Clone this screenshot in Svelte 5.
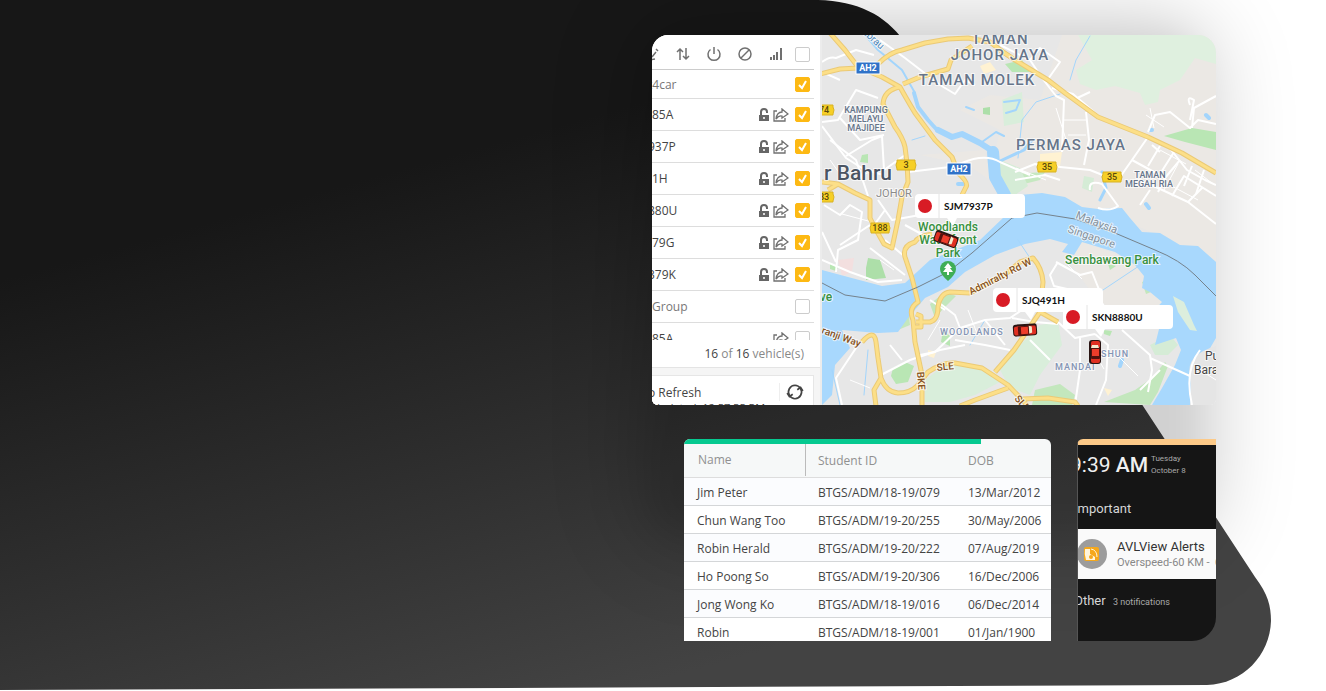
<script>
  const vehicles = [
    { name: 't4car', cut: true, group: true, checked: true },
    { name: '85A', lock: true, share: true, checked: true },
    { name: '937P', cut: true, lock: true, share: true, checked: true },
    { name: '1H', lock: true, share: true, checked: true },
    { name: '880U', cut: true, lock: true, share: true, checked: true },
    { name: '79G', lock: true, share: true, checked: true },
    { name: '379K', cut: true, lock: true, share: true, checked: true },
    { name: 'Group', group: true, checked: false },
    { name: '85A', share: true, checked: false }
  ];

  const students = [
    ['Jim Peter', 'BTGS/ADM/18-19/079', '13/Mar/2012'],
    ['Chun Wang Too', 'BTGS/ADM/19-20/255', '30/May/2006'],
    ['Robin Herald', 'BTGS/ADM/19-20/222', '07/Aug/2019'],
    ['Ho Poong So', 'BTGS/ADM/19-20/306', '16/Dec/2006'],
    ['Jong Wong Ko', 'BTGS/ADM/18-19/016', '06/Dec/2014'],
    ['Robin', 'BTGS/ADM/18-19/001', '01/Jan/1900']
  ];

  const arterials = [
    'M830 33L845 50L858 67L882 77L900 87Q906 98 915 113L935 140L952 157L958 173Q969 183 966 187L961 197',
    'M820 74L840 69L858 68L878 64Q890 52 902 50L925 43L948 39L968 38L990 42L1003 52L1015 60',
    'M903 84L920 77L948 69L951 60L972 46',
    'M900 87Q884 90 883 104L895 127Q903 138 905 147L907 163L908 182L902 197L898 220L892 248L884 244L875 228L870 218L870 200L855 193L838 184L822 182M838 184L828 190',
    'M932 234Q918 236 915 242Q902 246 905 257L912 278L918 302Q908 308 913 320L915 342L922 375L922 406M914 327L921 327L921 316L916 314',
    'M916 322L930 322Q938 320 938 307Q940 293 950 292L970 293L1003 276L1020 262L1033 258Q1042 268 1043 282L1040 312L1014 350L995 372M1040 312L1058 322',
    'M862 342Q874 328 876 342L878 358L881 378Q886 392 898 393Q910 393 917 386L928 372Q942 362 955 363L982 368L1008 385L1028 406M881 378L874 390L876 406M1008 388L975 400L960 406M1022 399L1048 398L1075 402L1078 406'
  ];

  const streets = [
    'M822 62Q830 56 836 58L856 50L874 55M822 122L838 120L856 90L878 98M840 118L860 140L884 135M830 140L856 160L868 196M880 40L905 58L940 85L955 94L965 80L975 85',
    'M822 126L846 158L865 170L884 175M846 156L872 140L882 136L884 170L905 155M908 172L950 167L962 163Q985 153 1000 162L1030 175M824 205L840 215L850 205L862 212L858 240L838 250L836 272',
    'M840 245L870 225M870 248L905 275M904 256L885 240M878 200L892 220L920 215M885 210L872 228M905 225L925 236M822 260L850 272L878 282L902 280M822 232L836 262',
    'M1000 45L1030 60L1042 78L1056 96L1064 100L1062 152M1046 82L1060 62L1040 48L1030 60M1052 88L1073 94L1094 112L1104 120M1086 112L1089 140L1084 165M1073 100L1090 92',
    'M822 72L840 80M1015 172L1035 164L1060 167L1090 170L1110 178M1015 180L1045 175L1060 180M1148 137L1132 160L1118 180M1132 160L1165 178L1180 160M1148 137L1168 146L1187 170L1205 180L1216 185',
    'M1148 132L1155 115L1170 112L1190 128L1198 120L1216 124M1192 128L1194 108L1216 96M1190 105Q1186 95 1194 100L1190 120M1152 145L1160 152M1160 146L1148 166M1174 152L1160 174M1192 166L1184 186M1204 170L1196 194',
    'M1138 180L1158 188L1188 202L1216 224M1150 190L1140 205M1172 196L1184 176L1216 196M1188 202L1202 188M1165 178L1158 192M1090 190Q1088 180 1102 184L1118 206Q1110 212 1098 208',
    'M938 302L955 315L960 328L935 352L920 355M960 328L985 320L1010 318L1025 308M955 340L985 345L1010 350M985 320L1005 345M930 300L945 310M1012 318L1035 322L1058 324',
    'M1058 262L1050 275L1054 286L1080 292L1100 300L1108 312M1056 262L1080 275L1092 272L1100 292M1058 322L1075 338L1095 334M1080 338L1080 370L1075 405M1095 334L1108 345L1106 380L1096 405M1122 330L1150 355L1152 370L1148 392M1150 358L1190 376',
    'M858 345L848 360L836 378L842 405M881 375L910 360L940 350L965 345M902 360L890 345M1030 340L1050 360M1140 390L1160 370M1192 405Q1184 370 1200 350'
  ];

  const parks = [
    { d: 'M1078 35H1216V64L1195 58L1180 80L1160 90L1158 102L1145 105L1140 93L1115 86L1096 90L1080 84L1076 70L1092 60Z', c: '#dff0df' },
    { d: 'M1164 136L1192 128L1216 132V150L1185 142Z', c: '#b9e6b4' },
    { d: 'M1005 64L1022 60L1030 72L1012 72Z', c: '#b9e6b4' },
    { d: 'M1014 174L1045 172L1040 180L1024 184Z', c: '#c6e8c1' },
    { d: 'M1002 100L1022 92L1024 122L1004 126Z', c: '#d9eedb' },
    { d: 'M1000 160L1020 168L1028 186L1012 197L1000 180Z', c: '#d5ecd6' },
    { d: 'M1084 176L1094 178L1092 192L1082 188Z', c: '#d5ecd6' },
    { d: 'M868 258L880 260L886 278L866 280L866 268Z', c: '#addfa9' },
    { d: 'M830 264L839 266L836 271L830 269Z', c: '#b9e6b4' },
    { d: 'M862 155L868 154L868 163L860 162Z', c: '#b9e6b4' },
    { d: 'M983 108L990 107L990 115L983 114Z', c: '#addfa9' },
    { d: 'M893 368L905 362L914 366L908 382L896 384L891 376Z', c: '#b9e6b4' },
    { d: 'M925 380L945 365L965 362L985 370L1000 382L975 395L950 402H925Z', c: '#d9eedb' },
    { d: 'M1000 370L1020 345L1040 325L1058 322L1062 345L1040 375L1030 395L1010 388Z', c: '#d9eedb' },
    { d: 'M1035 390L1060 384L1075 395L1072 405H1032Z', c: '#c3e7bd' },
    { d: 'M930 304L945 292L956 296L944 308L935 318Z', c: '#c3e7bd' },
    { d: 'M943 330L950 336L950 346L941 342Z', c: '#b9e6b4' },
    { d: 'M900 315L908 308L910 325L898 330Z', c: '#c3e7bd' },
    { d: 'M1104 330L1112 331L1110 336L1104 334Z', c: '#b9e6b4' },
    { d: 'M1108 264L1116 266L1110 270Z', c: '#b9e6b4' },
    { d: 'M1150 345L1170 335L1178 345L1168 355L1155 355Z', c: '#d5ecd6' },
    { d: 'M1104 402L1135 390L1152 378L1165 362L1168 366L1158 392L1150 405Z', c: '#c3e7bd' },
    { d: 'M1142 282L1152 278L1156 290L1146 294Z', c: '#c3e7bd' }
  ];

  const plates = [
    { id: 'SJM7937P', x: 915, y: 194 },
    { id: 'SJQ491H', x: 993, y: 288 },
    { id: 'SKN8880U', x: 1063, y: 305 }
  ];

  const cars = [
    { x: 946, y: 239, r: 20 },
    { x: 1025, y: 330, r: -4 },
    { x: 1095, y: 352, r: -90 }
  ];

  const shields = [
    { t: 'AH2', x: 868, y: 68, blue: true },
    { t: 'AH2', x: 959, y: 169, blue: true },
    { t: '3', x: 906, y: 165 },
    { t: '35', x: 1047, y: 167 },
    { t: '35', x: 1112, y: 177 },
    { t: '188', x: 880, y: 228 },
    { t: '74', x: 824, y: 110 },
    { t: '33', x: 824, y: 197 }
  ];
</script>

<section class="hero">
  <svg class="backdrop" viewBox="0 0 1326 691" preserveAspectRatio="none" aria-hidden="true">
    <defs>
      <linearGradient id="charcoal" gradientUnits="userSpaceOnUse" x1="470" y1="150" x2="620" y2="691">
        <stop offset="0" stop-color="#171717" />
        <stop offset="0.55" stop-color="#2f2f2f" />
        <stop offset="1" stop-color="#434343" />
      </linearGradient>
    </defs>
    <path fill="url(#charcoal)" d="M0 0H818C858 1 885 15 904 41L1255 577C1268 594 1271 606 1271 621C1270 655 1243 684 1207 685L0 690Z" />
  </svg>

  <div class="gallery">
    <div class="tracker">
      <aside class="panel">
        <div class="tools">
          <button aria-label="Link"><svg viewBox="0 0 16 16"><path d="M8 11l4-5M5 14l6-1M12 3l2 2" /></svg></button>
          <button aria-label="Sort"><svg viewBox="0 0 16 16"><path d="M5 14V3M2 6l3-3 3 3M11 2v11M8 10l3 3 3-3" /></svg></button>
          <button aria-label="Power"><svg viewBox="0 0 16 16"><path d="M8 1v7M4.500 3.500a6 6 0 1 0 7 0" /></svg></button>
          <button aria-label="Block"><svg viewBox="0 0 16 16"><circle cx="8" cy="8" r="6" /><path d="M4 12l8-8" /></svg></button>
          <button aria-label="Signal"><svg viewBox="0 0 16 16"><path stroke-width="2" d="M3 14v-3M6 14V9M9 14V6M13 14V2" /></svg></button>
          <input type="checkbox" aria-label="All" />
        </div>
        <ul class="list">
          {#each vehicles as v, i}
            <li class:first={i === 0}>
              <label for="vehicle-{i}" class:cut={v.cut} class:group={v.group}>{v.name}</label>
              {#if v.lock}
                <svg class="lock" viewBox="0 0 12 14" aria-hidden="true">
                  <path d="M3 7V4a3 3 0 0 1 6 0v1" fill="none" stroke="#666" stroke-width="2" />
                  <path d="M1 7h10v6H1z" fill="#666" /><path d="M5 9h2v2H5z" fill="#ddd" />
                </svg>
              {/if}
              {#if v.share}
                <svg class="share" viewBox="0 0 16 14" aria-hidden="true">
                  <path d="M4 3H1v10h11v-3" /><path d="M9 1l6 5-6 4V8Q6 7 3 11Q4 4 9 4z" />
                </svg>
              {/if}
              <input id="vehicle-{i}" type="checkbox" checked={v.checked} />
            </li>
          {/each}
        </ul>
        <p class="count"><b>16</b> of <b>16</b> vehicle(s)</p>
        <div class="refresh">
          <div class="refresh-box">
            <div class="refresh-row">
              <span class="cut">o Refresh</span>
              <button aria-label="Refresh">
                <svg viewBox="0 0 16 16"><path d="M3 11A6 6 0 0 1 8 2q3 0 5 3M13 5a6 6 0 0 1-5 9q-3 0-5-3" /><path d="M1 9l2 3 3-2M15 7l-2-3-3 2" /></svg>
              </button>
            </div>
            <span class="updated">Updated: 12:57:55 PM</span>
          </div>
        </div>
      </aside>

      <svg class="map" viewBox="822 35 394 370" preserveAspectRatio="xMidYMid slice" role="img" aria-label="Map">
        <rect x="822" y="35" width="394" height="370" fill="#e7e7e7" />
        <path fill="#ebe8e4" d="M1062 35L1216 35V262L1135 225L1040 200L990 175L1000 130L960 110L990 95L1040 100Z" />
        <path fill="#ebe8e4" d="M1082 240L1140 265L1165 300L1150 330L1110 310L1090 290L1060 250ZM920 155L985 150L990 180L968 165Z" />
        {#each parks as p}<path d={p.d} fill={p.c} />{/each}
        <path fill="#f3dfdf" d="M838 260L854 258L852 272L842 276Z" />
        <path fill="#fff2d2" d="M1040 154L1062 152L1060 166L1040 170ZM980 66L990 62L996 70L984 74ZM928 350L936 352L934 358L928 356ZM1104 388L1112 390L1108 396Z" />
        <path fill="#a8d8fd" d="M822 270L848 277L882 286L905 283L930 260L950 252L980 240L1004 217L1010 205L1003 193L1010 197L1020 195L1042 193L1065 197L1082 207L1098 209L1122 208L1130 218L1142 232L1160 233L1180 245L1198 246L1216 262V338L1202 362L1192 378L1190 405H1152L1162 388L1175 365L1181 350L1176 338L1155 345L1160 325L1150 315L1162 302L1150 292L1142 288L1144 276L1135 265L1115 252L1082 242L1074 255L1062 252L1068 244L1050 239L1025 244L995 255L965 272L948 287L925 298L908 318L898 332L878 333L842 330L850 348L835 365L832 395L822 405Z" />
        <path fill="#dceedd" d="M1173 296L1184 302L1194 325L1197 331L1190 330L1178 312Z" />
        <path fill="#e5e5e5" d="M1216 346Q1185 355 1190 376L1192 405H1216Z" />
        <g fill="none" stroke="#a3d5fc" stroke-linejoin="round" stroke-linecap="round">
          <path stroke-width="2" d="M866 36L878 50L902 70L915 93" />
          <path stroke-width="1" d="M1090 36L1076 60L1070 80M1060 94L1036 102L1022 120L1018 158" />
          <path stroke-width="4" d="M914 93L918 107L928 120L938 131" />
          <path stroke-width="6" d="M938 130L952 137L962 134L980 143L991 150" />
          <path stroke-width="12" d="M993 152L995 177L1005 195" />
          <path stroke-width="3" d="M998 162L1024 150L1032 140M1100 200L1106 188L1102 172" />
          <path stroke-width="2" d="M966 107L974 110M1004 102L1020 100L1016 110L1006 113M982 142L996 132L1004 136" />
          <path stroke-width="1" d="M832 370L840 405M868 350L864 395M1018 240L1030 258M1100 292L1145 262M985 320L970 345M912 140L925 136" />
          <path stroke-width="4" d="M1150 130L1152 130M1206 115L1209 118M1120 366L1122 360M1146 204L1149 208M958 184L963 184" />
        </g>
        <g fill="none" stroke="#fff" stroke-width="2" stroke-linejoin="round">
          {#each streets as d}<path {d} />{/each}
        </g>
        <path fill="none" stroke="#fff" stroke-width="1" d="M1146 115l18 12M1150 108l4 20M1160 150l26 14M1168 184l30 16M1178 164l-14 26M1195 170l18 14M1016 168l30 12M1056 108l12 38M1064 120h22M1068 135h18M830 160l10 14M856 178l18-8M888 188l14 8M842 214l30 8M880 260l14 10M940 320l-12 20M968 310l10 26M1090 345l14 24M1112 350l26 26M1068 265l14 14M850 380l20 8M1200 370l16 10" />
        <g fill="none" stroke="#ebca76" stroke-width="5" stroke-linejoin="round">
          {#each arterials as d}<path {d} />{/each}
          <path d="M1000 50L1015 60L1048 80L1065 93L1098 117L1148 137L1182 153L1216 173" />
        </g>
        <g fill="none" stroke="#fcdf88" stroke-width="3" stroke-linejoin="round">
          {#each arterials as d}<path {d} />{/each}
          <path d="M1000 50L1015 60L1048 80L1065 93L1098 117L1148 137L1182 153L1216 173" />
        </g>
        <path fill="none" stroke="#75828c" stroke-width="1" d="M822 283L845 295L885 301L918 287L948 272L972 253L1012 218L1037 213L1075 219L1115 233L1155 250Q1180 260 1195 275L1216 296" />

        <g class="district" text-anchor="middle">
          <text x="1000" y="44">TAMAN</text>
          <text x="1000" y="60">JOHOR JAYA</text>
          <text x="977" y="85">TAMAN MOLEK</text>
          <text x="1071" y="150">PERMAS JAYA</text>
        </g>
        <text class="city" x="824" y="180">r Bahru</text>
        <g class="suburb" text-anchor="middle">
          <text x="866" y="113">KAMPUNG</text>
          <text x="866" y="122">MELAYU</text>
          <text x="866" y="131">MAJIDEE</text>
          <text x="1150" y="178">TAMAN</text>
          <text x="1149" y="187">MEGAH RIA</text>
        </g>
        <text class="state" x="876" y="197">JOHOR</text>
        <g class="area">
          <text x="940" y="335">WOODLANDS</text>
          <text x="1055" y="370">MANDAI</text>
          <text x="1101" y="357">SHUN</text>
        </g>
        <g class="park" text-anchor="middle">
          <text x="948" y="231">Woodlands</text>
          <text x="948" y="244">Waterfront</text>
          <text x="948" y="257">Park</text>
          <text x="1112" y="264">Sembawang Park</text>
          <text x="826" y="301">ve</text>
        </g>
        <g class="road">
          <text transform="translate(971 295) rotate(-27)">Admiralty Rd W</text>
          <text transform="translate(821 333) rotate(20)">ranji Way</text>
          <text transform="translate(937 371) rotate(-6)">SLE</text>
          <text transform="translate(917 372) rotate(86)">BKE</text>
          <text transform="translate(1014 399) rotate(48)">SLE</text>
        </g>
        <text class="river" transform="translate(862 33) rotate(42)">ebrau</text>
        <g class="border-label">
          <text transform="translate(1075 218) rotate(21)">Malaysia</text>
          <text transform="translate(1067 232) rotate(19)">Singapore</text>
        </g>
        <g class="place">
          <text x="1205" y="360">Pu</text>
          <text x="1194" y="374">Bara</text>
        </g>

        {#each shields as s}
          <g transform="translate({s.x} {s.y})">
            {#if s.blue}
              <rect x="-12" y="-6" width="24" height="12" fill="#2f72c8" stroke="#fff" />
            {:else}
              <path d="M-9 -5H9V-3L10 0L9 4V5H-9V4L-10 0L-9 -3Z" fill="#f6cf26" stroke="#d9b222" />
            {/if}
            <text class="shield" class:light={s.blue} text-anchor="middle" y="3">{s.t}</text>
          </g>
        {/each}

        <path d="M948 281Q940 274 940 269A8 8 0 0 1 956 269Q956 274 948 281Z" fill="#3fae56" />
        <path d="M948 263l4 5h-2l3 4h-4v3h-2v-3h-4l3-4h-2z" fill="#fff" />

        {#each plates as p}
          <g transform="translate({p.x} {p.y})">
            <path d="M4 0H106Q110 0 110 4V20Q110 24 106 24H42L38 32L32 24H4Q0 24 0 20V4Q0 0 4 0Z" fill="#fff" />
            <path d="M24 0V24" stroke="#e4e4e4" />
            <circle cx="10" cy="12" r="7" fill="#d81b25" />
            <text class="plate" x="29" y="16">{p.id}</text>
          </g>
        {/each}

        {#each cars as c}
          <g transform="translate({c.x} {c.y}) rotate({c.r})">
            <rect x="-12" y="-6" width="24" height="12" rx="3" fill="#2a1513" />
            <rect x="-11" y="-4" width="22" height="9" rx="2" fill="#e03022" />
            <rect x="-7" y="-4" width="12" height="9" rx="1" fill="#54120e" />
            <rect x="-4" y="-3" width="7" height="7" fill="#ee3d2b" />
            <path d="M4 -4L7 -3V3L4 4Z" fill="#f4ecd0" />
          </g>
        {/each}
      </svg>
    </div>

    <div class="lower">
      <div class="students">
        <div class="accent"></div>
        <table>
          <thead>
            <tr><th class="name"><span>Name</span></th><th class="sid">Student ID</th><th>DOB</th></tr>
          </thead>
          <tbody>
            {#each students as s}
              <tr><td>{s[0]}</td><td class="sid">{s[1]}</td><td>{s[2]}</td></tr>
            {/each}
          </tbody>
        </table>
      </div>

      <div class="phone">
        <div class="clock">
          <span class="time">9:39 <b>AM</b></span>
          <span class="date">Tuesday<br />October 8</span>
        </div>
        <div class="section important">Important</div>
        <div class="alert">
          <svg viewBox="0 0 30 30" aria-hidden="true">
            <circle cx="15" cy="15" r="15" fill="#9c9c9c" />
            <rect x="7" y="8" width="15" height="14" rx="2" fill="#f5a81c" />
            <path d="M8 10h5v5l5 3v3H9Q7 15 8 10Z" fill="#fff5dc" />
            <path d="M14 10q6 1 6 8" fill="none" stroke="#fff5dc" /><circle cx="14" cy="18" r="2" fill="#f5a81c" />
          </svg>
          <div class="message">
            <div class="title">AVLView Alerts</div>
            <div class="text">Overspeed-60 KM -&nbsp; C</div>
          </div>
        </div>
        <div class="section other">Other <small>3 notifications</small></div>
      </div>
    </div>
  </div>
</section>

<style>
  :global(body) { margin: 0; background: #fff; }
  * { box-sizing: border-box; }
  .hero {
    position: relative;
    isolation: isolate;
    overflow: hidden;
    padding: 35px 110px 50px 0;
    font-family: "Open Sans", "Noto Sans", sans-serif;
    font-size: 12px;
    color: #444;
  }
  .backdrop { position: absolute; z-index: -1; inset: 0; width: 100%; height: 100%; }
  .gallery {
    position: relative;
    width: calc(50% - 44px);
    min-width: 564px;
    margin-left: auto;
    display: grid;
    gap: 34px;
  }
  .gallery::before {
    content: "";
    position: absolute;
    inset: 0 20px 110px 0;
    border-radius: 30px;
    background: rgba(0, 0, 0, 0.18);
    box-shadow: 0 0 80px 12px rgba(0, 0, 0, 0.22);
    filter: blur(16px);
  }
  .tracker, .lower { position: relative; }
  .tracker {
    display: grid;
    grid-template-columns: 170px 1fr;
    height: 370px;
    overflow: hidden;
    border-radius: 16px 18px 6px 6px;
    background: #fff;
  }
  .panel {
    position: relative;
    display: flex;
    flex-direction: column;
    min-height: 0;
    background: #fff;
    border-right: 2px solid #ececec;
    overflow: hidden;
  }
  .tools {
    display: flex;
    align-items: center;
    justify-content: flex-end;
    height: 35px;
    flex: none;
    margin-right: 6px;
    padding: 4px 4px 0 0;
    border-bottom: 1px solid #ccc;
  }
  button { border: 0; padding: 0; background: none; cursor: pointer; }
  .tools button { width: 31px; flex: none; display: grid; place-items: center; }
  .tools svg { width: 16px; height: 16px; fill: none; stroke: #707070; stroke-width: 1.500; }
  .tools input { margin-left: 4px; }
  input {
    appearance: none;
    flex: none;
    width: 15px;
    height: 15px;
    margin: 0;
    border: 1px solid #ccc;
    border-radius: 2px;
    background: #fff;
  }
  input:checked {
    border-color: #fdb913;
    background: #fdb913 url("data:image/svg+xml,%3Csvg xmlns='http://www.w3.org/2000/svg' viewBox='0 0 13 13'%3E%3Cpath d='M3 7l3 3 4-7' fill='none' stroke='%23fff' stroke-width='2'/%3E%3C/svg%3E");
  }
  .list { list-style: none; margin: 0; padding: 0; flex: 1; min-height: 0; overflow: hidden; }
  .list li {
    display: flex;
    align-items: center;
    height: 32px;
    margin-right: 6px;
    padding-right: 4px;
    border-bottom: 1px solid #ddd;
  }
  .list li.first { height: 29px; }
  .list label { flex: 1; }
  .list .group { color: #777; }
  .cut { margin-left: -4px; }
  .lock { width: 12px; height: 14px; margin-right: 3px; }
  .share { width: 16px; height: 14px; margin-right: 6px; fill: none; stroke: #707070; stroke-width: 1.300; }
  .count {
    flex: none;
    margin: 0;
    padding-right: 16px;
    height: 28px;
    line-height: 28px;
    text-align: right;
    color: #888;
    border-bottom: 1px solid #e4e4e4;
  }
  .count b { color: #444; font-weight: 400; }
  .refresh { flex: none; height: 37px; padding: 7px 6px 0 0; background: #f5f5f5; overflow: hidden; }
  .refresh-box { background: #fff; border: 1px solid #e6e6e6; border-left: 0; }
  .refresh-row { display: flex; align-items: center; justify-content: space-between; height: 26px; padding: 6px 9px 0 0; }
  .refresh-row button { padding-left: 6px; border-left: 1px solid #eee; display: grid; }
  .refresh-row svg { width: 18px; height: 18px; fill: none; stroke: #444; stroke-width: 1.500; }
  .updated { display: block; font-size: 11px; line-height: 12px; }

  .map { display: block; width: 100%; height: 370px; font-family: Roboto, sans-serif; }
  .map text { paint-order: stroke; stroke: rgba(255, 255, 255, 0.7); stroke-width: 2px; }
  .district { font-size: 15px; font-weight: 500; fill: #66758a; letter-spacing: 1px; }
  .city { font-size: 21px; font-weight: 500; fill: #4b5563; }
  .suburb { font-size: 9px; font-weight: 500; fill: #66758a; }
  .state { font-size: 11px; fill: #8b8b8b; }
  .area { font-size: 9px; font-weight: 500; fill: #8494b4; letter-spacing: 1px; }
  .park { font-size: 12px; font-weight: 500; fill: #38913f; }
  .road { font-size: 10px; font-weight: 500; fill: #86521c; }
  .river { font-size: 10px; fill: #4c87bb; }
  .border-label { font-size: 11px; fill: #84909b; }
  .place { font-size: 12px; fill: #454545; }
  .map .shield { font-size: 9px; font-weight: 500; fill: #59490d; stroke: none; }
  .map .shield.light { fill: #fff; font-weight: 700; }
  .map .plate { font-family: Lato, sans-serif; font-size: 10px; font-weight: 700; fill: #111; stroke: none; }

  .lower {
    display: grid;
    grid-template-columns: 367px 1fr;
    column-gap: 26px;
    height: 202px;
    padding-left: 32px;
  }
  .students, .phone { overflow: hidden; min-width: 0; }
  .students { border-radius: 6px 6px 0 0; background: #f6f8f8; }
  .accent { width: 81%; height: 5px; background: #06c990; }
  table { width: 100%; border-collapse: collapse; table-layout: fixed; }
  th, td { padding: 2px 0 0; text-align: left; font-weight: 400; white-space: nowrap; }
  th { height: 33px; padding: 0; color: #909090; border-bottom: 1px solid #ddd; }
  th.name { width: 134px; padding-left: 14px; }
  th.name span { display: block; width: 108px; line-height: 32px; border-right: 1px solid #bbb; }
  .sid { width: 150px; }
  td { height: 28px; border-bottom: 1px solid #d4d6d8; background: #fff; }
  td:first-child { padding-left: 13px; }
  tbody tr:nth-child(odd) td { background: #fbfcfe; }

  .phone {
    border-top: 6px solid #fdca88;
    border-left: 1px solid #555;
    border-radius: 6px 0 24px 0;
    background: #151515;
    color: #d6d6d6;
    font-family: Roboto, sans-serif;
    white-space: nowrap;
  }
  .clock { display: flex; align-items: center; gap: 3px; height: 40px; margin-left: -8px; }
  .time { font-size: 21px; color: #f0f0f0; }
  .time b { font-weight: 500; }
  .date { font-size: 8px; line-height: 12px; color: #aaa; }
  .section { margin-left: -4px; font-size: 13px; }
  .important { height: 44px; line-height: 48px; }
  .alert { display: flex; align-items: center; gap: 10px; height: 50px; background: #fafafa; }
  .alert svg { flex: none; width: 30px; height: 30px; margin-left: -1px; }
  .title { font-size: 13px; line-height: 16px; color: #333; }
  .text { font-size: 11px; line-height: 15px; color: #888; }
  .other { line-height: 44px; }
  .other small { margin-left: 4px; font-size: 9px; color: #aaa; }
</style>
